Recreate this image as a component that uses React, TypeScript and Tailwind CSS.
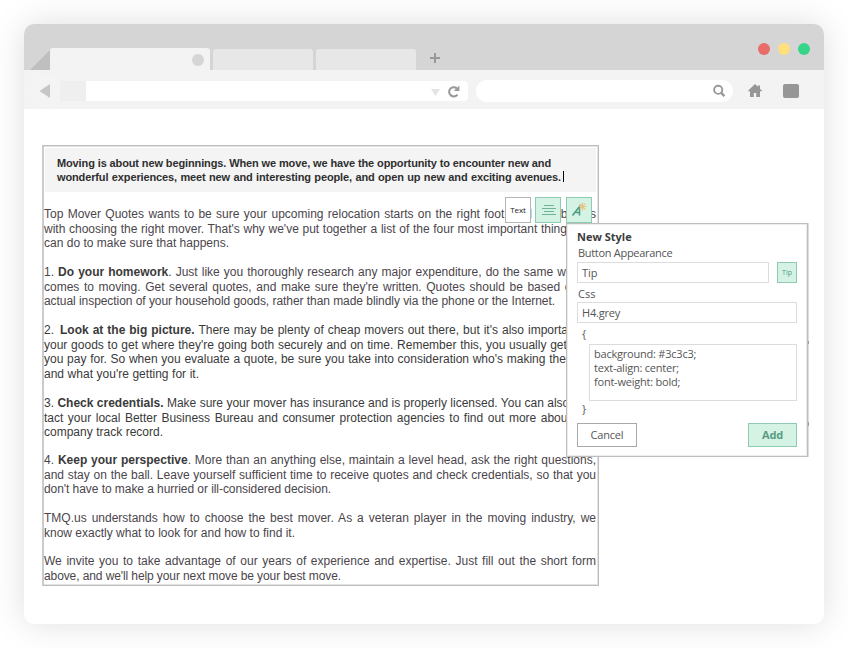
import React from "react";

const line = "block whitespace-nowrap [text-align-last:justify]";

function L({ w, children }: { w?: string; children: React.ReactNode }) {
  return <span className={`${line} ${w ?? "w-[552px]"}`}>{children}</span>;
}

function TabBar() {
  return (
    <div className="flex h-[46px] items-end bg-[#d5d5d5] pl-[6px]">
      <svg className="block" width="20" height="20" viewBox="0 0 20 20">
        <path d="M0 20L20 0V20Z" fill="#bfbfbf" />
      </svg>
      <div className="flex h-[22px] w-40 items-center justify-end rounded-t-[3px] bg-[#f3f3f3] pr-[6px]">
        <span className="mt-[2px] h-3 w-3 rounded-full bg-[#d5d5d5]" />
      </div>
      <div className="ml-[3px] h-[21px] w-[100px] rounded-t-[3px] bg-[#e7e7e7]" />
      <div className="ml-[3px] h-[21px] w-[100px] rounded-t-[3px] bg-[#e7e7e7]" />
      <svg className="mb-[7px] ml-[14px] block" width="10" height="10" viewBox="0 0 10 10">
        <path d="M4 0h2v4h4v2H6v4H4V6H0V4h4z" fill="#999" />
      </svg>
      <div className="mr-[14px] mb-[15px] ml-auto flex gap-2">
        <span className="h-3 w-3 rounded-full bg-[#e86c69]" />
        <span className="h-3 w-3 rounded-full bg-[#ffe07e]" />
        <span className="h-3 w-3 rounded-full bg-[#36d589]" />
      </div>
    </div>
  );
}

function NavBar() {
  return (
    <div className="flex h-[39px] items-center bg-[#f3f3f3]">
      <div className="mt-[3px] ml-[6px] flex h-8 w-8 items-center rounded-full bg-[#f4f4f4] pl-[9px]">
        <svg width="11" height="14" viewBox="0 0 11 14">
          <path d="M0.5 7L11 0V14Z" fill="#c6c6c6" />
        </svg>
      </div>
      <div className="mt-[3px] -ml-[2px] flex h-5">
        <div className="h-5 w-[26px] bg-[#efefef]" />
        <div className="flex h-5 w-[382px] items-center justify-end gap-[7px] rounded-r-[4px] bg-white pr-[8px]">
          <svg className="mt-[3px]" width="9" height="7" viewBox="0 0 9 7">
            <path d="M0 0H9L4.5 7Z" fill="#e4e4e4" />
          </svg>
          <svg width="13" height="13" viewBox="0 0 13 13">
            <path d="M9.8 3.4A4.6 4.6 0 1 0 10.4 9.6" fill="none" stroke="#999" strokeWidth="2.1" />
            <path d="M12.4 0.5V6H6.8Z" fill="#999" />
          </svg>
        </div>
      </div>
      <div className="mt-[3px] ml-2 flex h-[22px] w-[257px] items-center justify-end rounded-full bg-white pr-[7px]">
        <svg className="-mt-px" width="13" height="14" viewBox="0 0 13 14">
          <circle cx="5.2" cy="5.8" r="4.1" fill="none" stroke="#999" strokeWidth="1.9" />
          <path d="M8 8.7L11.4 12.2" stroke="#999" strokeWidth="2.4" />
        </svg>
      </div>
      <svg className="mt-[2px] ml-[15px]" width="14" height="13" viewBox="0 0 14 13">
        <path d="M7 0L10 2.8V1.5H12V4.7L14 6.8V7.3H12V13H8.2V9H5.8V13H2V7.3H0V6.8Z" fill="#969696" />
      </svg>
      <div className="mt-[3px] ml-[21px] h-[14px] w-4 rounded-[2px] bg-[#969696]" />
    </div>
  );
}

function Article() {
  return (
    <div className="h-[441px] w-[557px] border border-l-2 border-[#bdbdbd] border-l-[#cbcbcb] pt-px text-[12px] leading-[14.6px] text-[#4b454b] shadow-[inset_-1px_-1px_0_#e2e2e2,inset_0_1px_0_#e2e2e2]">
      <div className="mt-px ml-px h-[44px] w-[551px] bg-[#f4f4f4] pt-[8px] pl-[12px] text-[11px] leading-[14px] font-bold tracking-[-0.13px] text-[#2f2f2f]">
        <L w="w-[494px]">Moving is about new beginnings. When we move, we have the opportunity to encounter new and</L>
        <div className="flex">
          <L w="w-[504px]">wonderful experiences, meet new and interesting people, and open up new and exciting avenues.</L>
          <span className="mt-[1px] ml-[2px] h-[11px] w-px bg-black" />
        </div>
      </div>
      <div className="pt-[15px]">
        <p className="h-[58px]">
          <L>Top Mover Quotes wants to be sure your upcoming relocation starts on the right foot, and that begins</L>
          <L>with choosing the right mover. That's why we've put together a list of the four most important things you</L>
          <L w="w-[185px]">can do to make sure that happens.</L>
        </p>
        <p className="h-[58px]">
          <L>1. <b className="text-[#3a3a3a]">Do your homework</b>. Just like you thoroughly research any major expenditure, do the same when it</L>
          <L>comes to moving. Get several quotes, and make sure they're written. Quotes should be based on an</L>
          <L w="w-[511px] tracking-[-0.06px]">actual inspection of your household goods, rather than made blindly via the phone or the Internet.</L>
        </p>
        <p className="h-[73px] text-[#3a3a3a]">
          <L>2. <b className="ml-[2px]">Look at the big picture.</b> There may be plenty of cheap movers out there, but it's also important for</L>
          <L>your goods to get where they're going both securely and on time. Remember this, you usually get what</L>
          <L>you pay for. So when you evaluate a quote, be sure you take into consideration who's making the offer,</L>
          <L w="w-[155px]">and what you're getting for it.</L>
        </p>
        <p className="h-[57px] text-[#3a3a3a]">
          <L>3. <b>Check credentials.</b> Make sure your mover has insurance and is properly licensed. You can also con-</L>
          <L w="w-[548px]">tact your local Better Business Bureau and consumer protection agencies to find out more about the</L>
          <L w="w-[119px]">company track record.</L>
        </p>
        <p className="h-[58px]">
          <L>4. <b className="text-[#3a3a3a]">Keep your perspective</b>. More than an anything else, maintain a level head, ask the right questions,</L>
          <L>and stay on the ball. Leave yourself sufficient time to receive quotes and check credentials, so that you</L>
          <L w="w-[287px] tracking-[-0.06px]">don't have to make a hurried or ill-considered decision.</L>
        </p>
        <p className="h-[43px]">
          <L>TMQ.us understands how to choose the best mover. As a veteran player in the moving industry, we</L>
          <L w="w-[251px]">know exactly what to look for and how to find it.</L>
        </p>
        <p>
          <L>We invite you to take advantage of our years of experience and expertise. Just fill out the short form</L>
          <L w="w-[297px] tracking-[-0.1px]">above, and we'll help your next move be your best move.</L>
        </p>
      </div>
    </div>
  );
}

function Toolbar() {
  return (
    <div className="absolute top-[197px] left-[505px] flex font-['Open_Sans',sans-serif]">
      <div className="flex h-[26px] w-[26px] items-center justify-center border border-[#b5b5b5] bg-white text-[8px] tracking-[-0.1px] text-[#222]">Text</div>
      <div className="ml-[4px] flex h-[26px] w-[26px] items-center justify-center border border-[#8fcab2] bg-[#d4f3e5]">
        <svg className="ml-[2px]" width="14" height="11" viewBox="0 0 14 11">
          <path d="M2 0.5H12M0 3.5H14M2 6.5H12M0 9.5H14" stroke="#6fb398" strokeWidth="1" />
        </svg>
      </div>
      <div className="ml-[5px] flex h-[26px] w-[26px] items-center justify-center border border-[#8fcab2] bg-[#d4f3e5]">
        <svg width="18" height="18" viewBox="0 0 18 18">
          <path d="M2.5 14.5L9.5 5.5V14.5M5.5 11.5H9.5" fill="none" stroke="#4f9c80" strokeWidth="1.6" />
          <path d="M12.5 1.5V9.5M8.5 5.5H16.5M9.7 2.7L15.3 8.3M15.3 2.7L9.7 8.3" stroke="#eac385" strokeWidth="1.2" />
        </svg>
      </div>
    </div>
  );
}

function StyleDialog() {
  return (
    <div className="absolute top-[223px] left-[566px] h-[234px] w-[242px] border border-[#bdbdbd] bg-white pt-[5px] pr-[10px] pl-[10px] font-['Open_Sans',sans-serif] text-[11px] leading-[15px] text-[#555] shadow-[inset_0_0_0_1px_#ececec,1px_0_0_#dedede]">
      <h2 className="font-bold text-[#3c3c3c]">New Style</h2>
      <div className="mt-px pl-px tracking-[-0.3px]">Button Appearance</div>
      <div className="mt-[2px] flex justify-between">
        <div className="flex h-[21px] w-[192px] items-center border border-[#dcdcdc] pb-px pl-1">Tip</div>
        <div className="flex h-[21px] w-[20px] items-center justify-center border border-[#8fcab2] bg-[#d4f3e5] text-[7px] text-[#4f9c80]">Tip</div>
      </div>
      <div className="mt-[3px] pl-px">Css</div>
      <div className="mt-px flex h-[21px] items-center border border-[#dcdcdc] pb-px pl-1 tracking-[-0.2px]">H4.grey</div>
      <div className="mt-[3px] pl-[5px]">{"{"}</div>
      <div className="mt-[3px] ml-[12px] h-[57px] border border-[#dcdcdc] pt-[2px] pl-1 leading-[14px] tracking-[-0.22px]">
        <div>background: #3c3c3;</div>
        <div>text-align: center;</div>
        <div>font-weight: bold;</div>
      </div>
      <div className="pl-[5px]">{"}"}</div>
      <div className="mt-[7px] flex justify-between">
        <button className="h-[24px] w-[60px] border border-[#a9a9a9] pb-px leading-[20px] tracking-[-0.2px]">Cancel</button>
        <button className="h-[24px] w-[49px] border border-[#8fcab2] bg-[#d4f3e5] pb-px leading-[20px] font-bold tracking-[-0.1px] text-[#5a9c83]">Add</button>
      </div>
    </div>
  );
}

export default function App() {
  return (
    <div className="relative h-[648px] w-[848px] overflow-hidden bg-white p-6 font-['Liberation_Sans',Arial,sans-serif]">
      <div className="h-[600px] w-[800px] overflow-hidden rounded-[10px] bg-white shadow-[0_0_34px_rgba(0,0,0,0.13)]">
        <TabBar />
        <NavBar />
        <main className="pt-[36px] pl-[18px]">
          <Article />
        </main>
      </div>
      <Toolbar />
      <StyleDialog />
      <div className="absolute top-[341px] left-[808px] h-[3px] w-px bg-[#8aa9a0]" />
      <div className="absolute top-[422px] left-[808px] h-[4px] w-px bg-[#8aa9a0]" />
    </div>
  );
}
